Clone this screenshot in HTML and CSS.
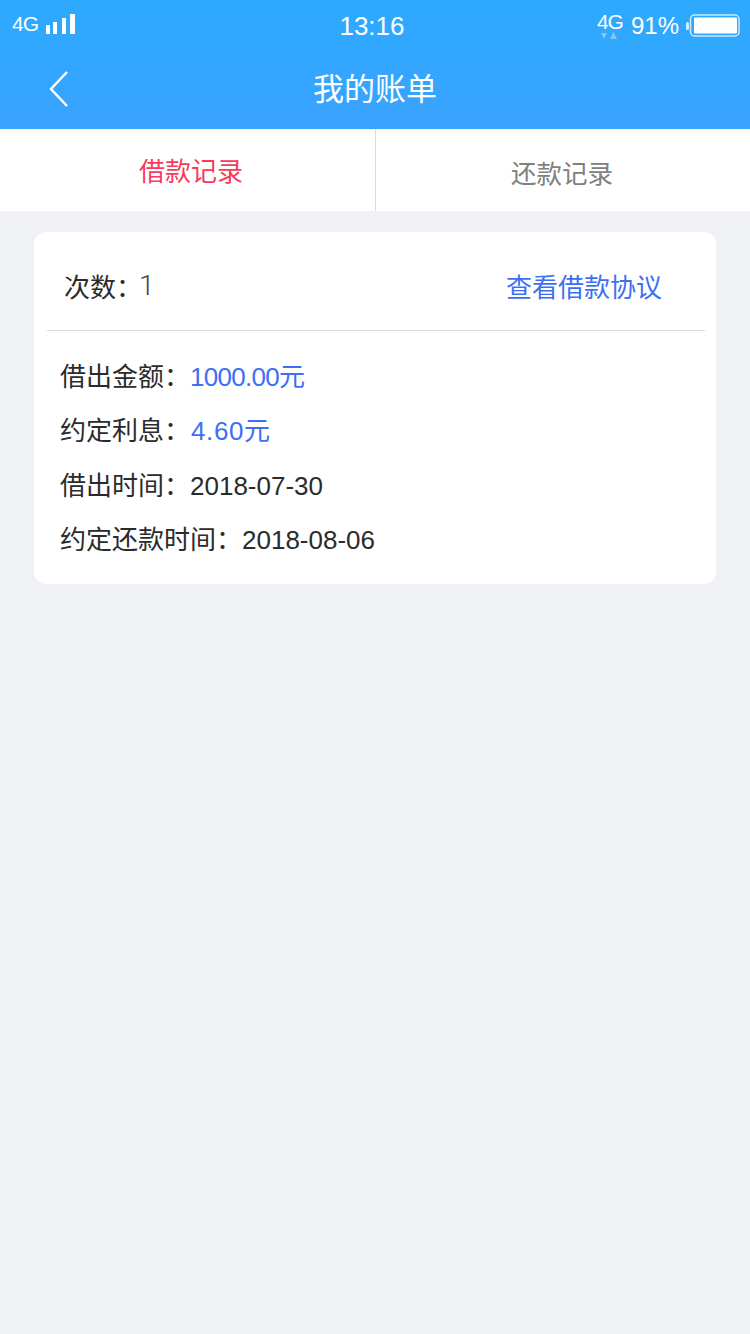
FILE: index.html
```html
<!DOCTYPE html>
<html lang="zh-CN">
<head>
    <meta charset="UTF-8">
    <meta name="viewport" content="width=device-width, initial-scale=1.0">
    <title>我的账单</title>
    <link rel="stylesheet" href="styles.css">
</head>
<body>
    <div class="header">
        <div class="status-bar">
            <div class="status-left">
                <span class="net">4G</span>
                <svg class="signal" width="31" height="22" viewBox="0 0 31 22">
                    <rect x="2" y="12" width="4" height="9" fill="#fff"/>
                    <rect x="9" y="9" width="4" height="12" fill="#fff"/>
                    <rect x="18" y="5" width="4" height="16" fill="#fff"/>
                    <rect x="26" y="1" width="5" height="20" fill="#fff"/>
                </svg>
            </div>
            <div class="clock">13:16</div>
            <div class="status-right">
                <div class="net-wrap">
                    <span class="net">4G</span>
                    <svg class="arrows" width="22" height="7" viewBox="0 0 22 7">
                        <path d="M2 1h6L5 7z" fill="#fff" opacity="0.4"/>
                        <path d="M11 7h7L14.500 0z" fill="#fff" opacity="0.4"/>
                    </svg>
                </div>
                <span class="percent">91%</span>
                <svg class="battery" width="55" height="23" viewBox="0 0 55 23">
                    <rect x="1" y="8" width="3" height="8" rx="1.500" fill="#fff" opacity="0.8"/>
                    <rect x="5.500" y="1" width="48.500" height="21" rx="4" fill="none" stroke="#fff" stroke-opacity="0.75" stroke-width="1.500"/>
                    <rect x="9" y="3.500" width="43" height="16" rx="1" fill="#fff"/>
                </svg>
            </div>
        </div>
        <div class="title-bar">
            <svg class="back" width="24" height="38" viewBox="0 0 24 38">
                <path d="M19 2L3 19L19 36" fill="none" stroke="#fff" stroke-width="2.500"/>
            </svg>
            <h1>我的账单</h1>
        </div>
    </div>

    <div class="tabs">
        <div class="tab tab-active">借款记录</div>
        <div class="tab">还款记录</div>
    </div>

    <div class="card">
        <div class="card-top">
            <div class="count">次数<span class="colon">：</span><span class="count-num">1</span></div>
            <div class="link">查看借款协议</div>
        </div>
        <div class="card-body">
            <div class="row">借出金额：<span class="blue"><span class="tight">1000.00</span>元</span></div>
            <div class="row">约定利息：<span class="blue interest"><span class="wide">4.60</span>元</span></div>
            <div class="row">借出时间：<span>2018-07-30</span></div>
            <div class="row">约定还款时间：<span>2018-08-06</span></div>
        </div>
    </div>
</body>
</html>
```

FILE: styles.css
```css
* {
    box-sizing: border-box;
}
body {
    margin: 0;
    min-height: 1334px;
    background-color: #f0f1f5;
    font-family: "Liberation Sans", "Noto Sans CJK SC", sans-serif;
    color: #2b2b2b;
}
.header {
    height: 129px;
    background: linear-gradient(#2caafe, #3aa2fe);
    color: white;
}
.status-bar {
    height: 50px;
    padding: 0 10px 0 12px;
    display: flex;
    justify-content: space-between;
    align-items: center;
}
.status-left {
    display: flex;
    align-items: center;
    gap: 6px;
    width: 200px;
    margin-bottom: 3px;
}
.net {
    font-size: 21px;
    letter-spacing: -1px;
    line-height: 21px;
}
.clock {
    font-size: 26px;
    margin: 2px 0 0 -8px;
}
.status-right {
    display: flex;
    align-items: center;
    justify-content: flex-end;
    width: 200px;
}
.net-wrap {
    display: flex;
    flex-direction: column;
    align-items: center;
    margin-right: 8px;
}
.arrows {
    display: block;
}
.percent {
    font-size: 24px;
    margin: 2px 6px 0 0;
}
.title-bar {
    height: 79px;
    position: relative;
    display: flex;
    align-items: center;
    justify-content: center;
}
.title-bar h1 {
    margin: 0 0 7px;
    font-size: 31px;
    font-weight: normal;
}
.back {
    position: absolute;
    left: 48px;
    top: 20px;
}
.tabs {
    display: flex;
    height: 82px;
    background: white;
}
.tab {
    flex: 1;
    display: flex;
    align-items: center;
    justify-content: center;
    font-size: 25.500px;
    color: #808080;
    padding: 2px 2px 0 0;
}
.tab-active {
    flex: 0 0 376px;
    font-size: 26px;
    color: #f73b5c;
    border-right: 1px solid #dcdcdc;
    padding: 0 0 2px 7px;
}
.card {
    width: 682px;
    height: 352px;
    margin: 21px 0 0 34px;
    background: white;
    border-radius: 12px;
    padding: 0 11px 0 13px;
}
.card-top {
    height: 99px;
    border-bottom: 1px solid #d9d9d9;
    display: flex;
    justify-content: space-between;
    align-items: center;
    padding: 8px 43px 0 17px;
    font-size: 26px;
}
.count {
    display: flex;
    align-items: center;
}
.colon {
    letter-spacing: -3px;
}
.count-num {
    font-family: Roboto, sans-serif;
    font-weight: 300;
    font-size: 28px;
    color: #444;
}
.link {
    color: #3d6ff5;
}
.card-body {
    padding: 18.700px 0 0 13px;
}
.row {
    height: 54.500px;
    line-height: 54px;
    font-size: 26px;
}
.blue {
    color: #3d6ff5;
}
.tight {
    letter-spacing: -0.700px;
}
.wide {
    letter-spacing: 0.600px;
}
.interest {
    margin-left: 1px;
}
```
